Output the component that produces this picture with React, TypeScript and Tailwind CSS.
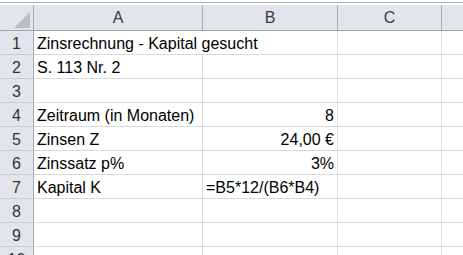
const rows: { a?: string; b?: string; bAlign?: "left" | "right"; span?: boolean }[] = [
  { a: "Zinsrechnung - Kapital gesucht", span: true },
  { a: "S. 113 Nr. 2" },
  {},
  { a: "Zeitraum (in Monaten)", b: "8", bAlign: "right" },
  { a: "Zinsen Z", b: "24,00 €", bAlign: "right" },
  { a: "Zinssatz p%", b: "3%", bAlign: "right" },
  { a: "Kapital K", b: "=B5*12/(B6*B4)", bAlign: "left" },
  {},
  {},
  {},
];

function Corner() {
  return (
    <div className="w-[34px] shrink-0 border-r border-[#a6abb2] flex items-end justify-end pr-[3px] pb-[2px]">
      <svg width="16" height="16" viewBox="0 0 16 16">
        <polygon points="16,0 16,16 0,16" fill="#b9bdc3" />
      </svg>
    </div>
  );
}

export default function App() {
  return (
    <div
      className="w-[463px] h-[255px] overflow-hidden bg-white text-black"
      style={{ fontFamily: '"Liberation Sans", Arial, sans-serif' }}
    >
      <div className="h-[5px] pt-[2px]">
        <div className="border-t border-[#a9acb0]" />
      </div>

      {/* column headers */}
      <div className="flex h-[26px] bg-[#e2e5e9] border-b border-[#9ea4ab] text-[16px] text-[#3b3b3b]">
        <Corner />
        <div className="w-[169px] shrink-0 border-r border-[#a6abb2] flex items-end justify-center pb-[2px] leading-[20px]">A</div>
        <div className="w-[135px] shrink-0 border-r border-[#a6abb2] flex items-end justify-center pb-[2px] leading-[20px]">B</div>
        <div className="w-[104px] shrink-0 border-r border-[#a6abb2] flex items-end justify-center pb-[2px] leading-[20px]">C</div>
        <div className="flex-1" />
      </div>

      {rows.map((r, i) => (
        <div key={i} className="flex h-[24px] text-[16px] leading-[20px]">
          <div className="w-[34px] shrink-0 bg-[#e2e5e9] border-r border-b border-r-[#a6abb2] border-b-[#c9cdd2] flex items-end justify-center text-[#333]">
            {i + 1}
          </div>
          {r.span ? (
            <div className="w-[304px] shrink-0 border-r border-b border-[#d9dadc] flex items-end px-[3px] whitespace-nowrap">
              {r.a}
            </div>
          ) : (
            <>
              <div className="w-[169px] shrink-0 border-r border-b border-[#d9dadc] flex items-end px-[3px] whitespace-nowrap">
                {r.a}
              </div>
              <div
                className={`w-[135px] shrink-0 border-r border-b border-[#d9dadc] flex items-end px-[3px] whitespace-nowrap ${
                  r.bAlign === "right" ? "justify-end" : "justify-start"
                }`}
              >
                {r.b}
              </div>
            </>
          )}
          <div className="w-[104px] shrink-0 border-r border-b border-[#d9dadc]" />
          <div className="flex-1 border-b border-[#d9dadc]" />
        </div>
      ))}
    </div>
  );
}
